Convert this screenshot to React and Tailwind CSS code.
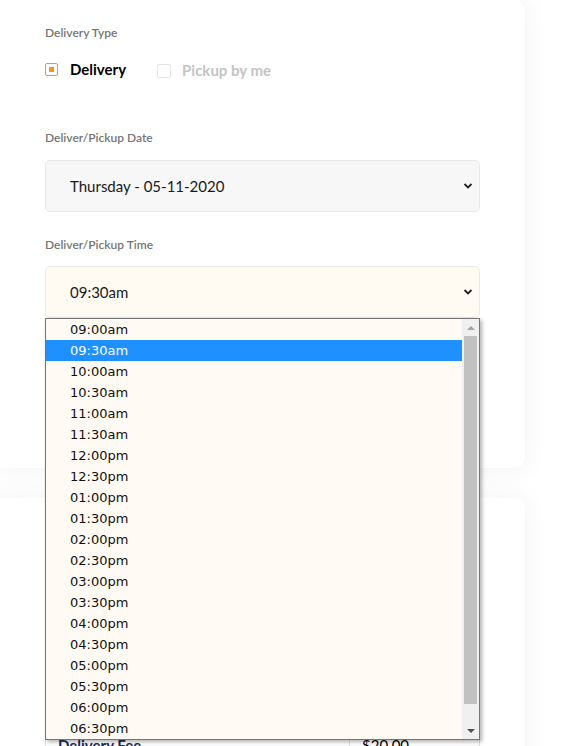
import React from 'react';

const times = [
  '09:00am', '09:30am', '10:00am', '10:30am', '11:00am', '11:30am',
  '12:00pm', '12:30pm', '01:00pm', '01:30pm', '02:00pm', '02:30pm',
  '03:00pm', '03:30pm', '04:00pm', '04:30pm', '05:00pm', '05:30pm',
  '06:00pm', '06:30pm',
];

const Chevron = () => (
  <svg width="10" height="7" viewBox="0 0 10 7" className="absolute right-[6px] top-1/2 -translate-y-1/2">
    <path d="M1.5 1.5 L5 5 L8.5 1.5" fill="none" stroke="#222" strokeWidth="1.8" />
  </svg>
);

const Label = ({ children, className = '' }) => (
  <div className={`text-[12px] font-semibold text-[#757575] leading-4 ${className}`}>{children}</div>
);

const App = () => {
  return (
    <div className="h-[746px] bg-white overflow-hidden relative" style={{ fontFamily: 'Lato, "Open Sans", sans-serif' }}>
      <div className="w-[525px]">
        {/* delivery card */}
        <div className="bg-white rounded-br-[10px] rounded-tr-[10px] shadow-[0_0_28px_rgba(0,0,0,0.06)] pl-[45px] pr-[45px] pt-[25px] h-[468px]">
          <Label>Delivery Type</Label>
          <div className="flex items-center mt-[17px] h-[22px]">
            <span className="w-[13px] h-[13px] border-[1.5px] border-[#f7941d] rounded-[2px] flex items-center justify-center">
              <span className="w-[5px] h-[5px] bg-[#f7941d]" />
            </span>
            <span className="ml-[12px] text-[15px] font-bold text-black">Delivery</span>
            <span className="ml-[31px] mt-[3px] w-[14px] h-[14px] border border-[#e4e4e4] rounded-[2px]" />
            <span className="ml-[11px] mt-[3px] text-[15px] font-bold text-[#c4c4c4]">Pickup by me</span>
          </div>

          <Label className="mt-[50px]">Deliver/Pickup Date</Label>
          <div className="relative mt-[14px] h-[52px] rounded-[5px] border border-[#e8e8e8] bg-[#f7f7f7] flex items-center pl-[24px] text-[15px] text-[#1a1a1a]">
            Thursday - 05-11-2020
            <Chevron />
          </div>

          <Label className="mt-[25px]">Deliver/Pickup Time</Label>
          <div className="relative mt-[13px] h-[52px] rounded-[5px] border border-[#efe9df] bg-[#fffbf3] flex items-center pl-[24px] text-[15px] text-[#1a1a1a]">
            09:30am
            <Chevron />
          </div>
        </div>

        {/* order summary card */}
        <div className="mt-[30px] bg-white rounded-tr-[10px] shadow-[0_0_28px_rgba(0,0,0,0.06)] pl-[45px] pr-[45px] pt-[229px] h-[300px]">
          <div className="border border-[#e0e0e0] text-[15px]">
            <div className="flex h-[34px]">
              <div className="w-[303px] px-[12px] flex items-center font-bold text-[#1a2b5c]">Delivery Fee</div>
              <div className="flex-1 border-l border-[#e0e0e0] px-[12px] flex items-center">$20.00</div>
            </div>
          </div>
        </div>
      </div>

      {/* open select list */}
      <div
        className="absolute left-[45px] top-[318px] w-[435px] h-[422px] border border-[#767676] bg-[#fffaf3] shadow-[2px_2px_4px_rgba(0,0,0,0.3)] flex"
        style={{ fontFamily: '"DejaVu Sans", Verdana, sans-serif' }}
      >
        <div className="flex-1">
          {times.map((t) => (
            <div
              key={t}
              className={`h-[21px] pl-[24px] flex items-center text-[13px] ${t === '09:30am' ? 'bg-[#1e90ff] text-white' : 'text-[#111]'}`}
            >
              {t}
            </div>
          ))}
        </div>
        <div className="w-[17px] bg-[#f0f0f0] flex flex-col items-center">
          <div className="h-[17px] flex items-center justify-center">
            <svg width="8" height="4" viewBox="0 0 8 4"><path d="M0 4 L4 0 L8 4 Z" fill="#a3a3a3" /></svg>
          </div>
          <div className="w-[13px] h-[368px] bg-[#c1c1c1]" />
          <div className="flex-1" />
          <div className="h-[17px] flex items-center justify-center">
            <svg width="8" height="4" viewBox="0 0 8 4"><path d="M0 0 L8 0 L4 4 Z" fill="#505050" /></svg>
          </div>
        </div>
      </div>
    </div>
  );
};

export default App;
